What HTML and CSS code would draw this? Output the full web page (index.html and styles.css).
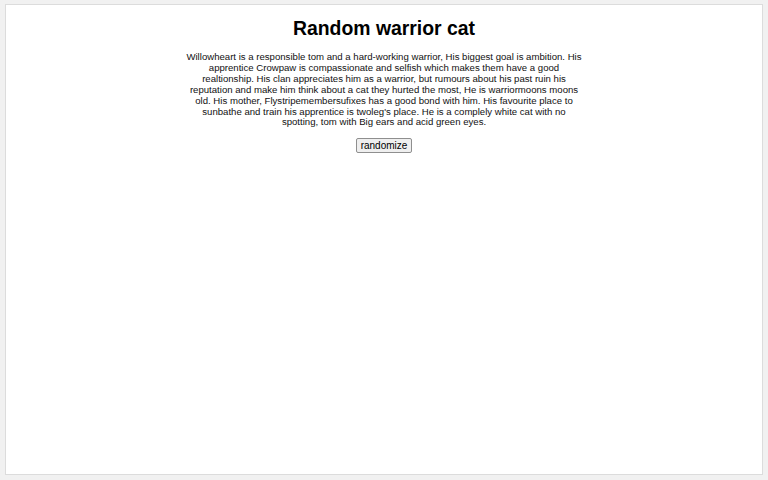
FILE: index.html
```html
<!DOCTYPE html>
<html>
<head>
<meta charset="utf-8">
<link rel="stylesheet" href="styles.css">
</head>
<body>
<div class="page">
  <h1 class="title">Random warrior cat</h1>
  <p class="story">Willowheart is a responsible tom and a hard-working warrior, His biggest goal is ambition. His apprentice Crowpaw is compassionate and selfish which makes them have a good realtionship. His clan appreciates him as a warrior, but rumours about his past ruin his reputation and make him think about a cat they hurted the most, He is warriormoons moons old. His mother, Flystripemembersufixes has a good bond with him. His favourite place to sunbathe and train his apprentice is twoleg's place. He is a complely white cat with no spotting, tom with Big ears and acid green eyes.</p>
  <div class="actions"><button class="btn">randomize</button></div>
</div>
</body>
</html>
```
FILE: styles.css
```css
html, body {
  margin: 0;
  padding: 0;
  background: #f1f1f1;
  font-family: "Liberation Sans", Arial, sans-serif;
}
.page {
  margin: 4px 5px 0 5px;
  height: 471px;
  box-sizing: border-box;
  background: #ffffff;
  border: 1px solid #dcdcdc;
  padding-top: 12px;
  text-align: center;
  color: #000;
}
.title {
  font-size: 19.4px;
  font-weight: bold;
  margin: 0 0 12px 0;
  line-height: 23px;
}
.story {
  width: 400px;
  margin: 0 auto;
  font-size: 9.6px;
  line-height: 10.9px;
  color: #111;
}
.actions {
  margin-top: 7px;
}
.btn {
  font-family: "Liberation Sans", Arial, sans-serif;
  font-size: 10px;
  padding: 1px 4px;
  background: #efefef;
  border: 1px solid #8f8f8f;
  border-radius: 2px;
  color: #000;
}
```
